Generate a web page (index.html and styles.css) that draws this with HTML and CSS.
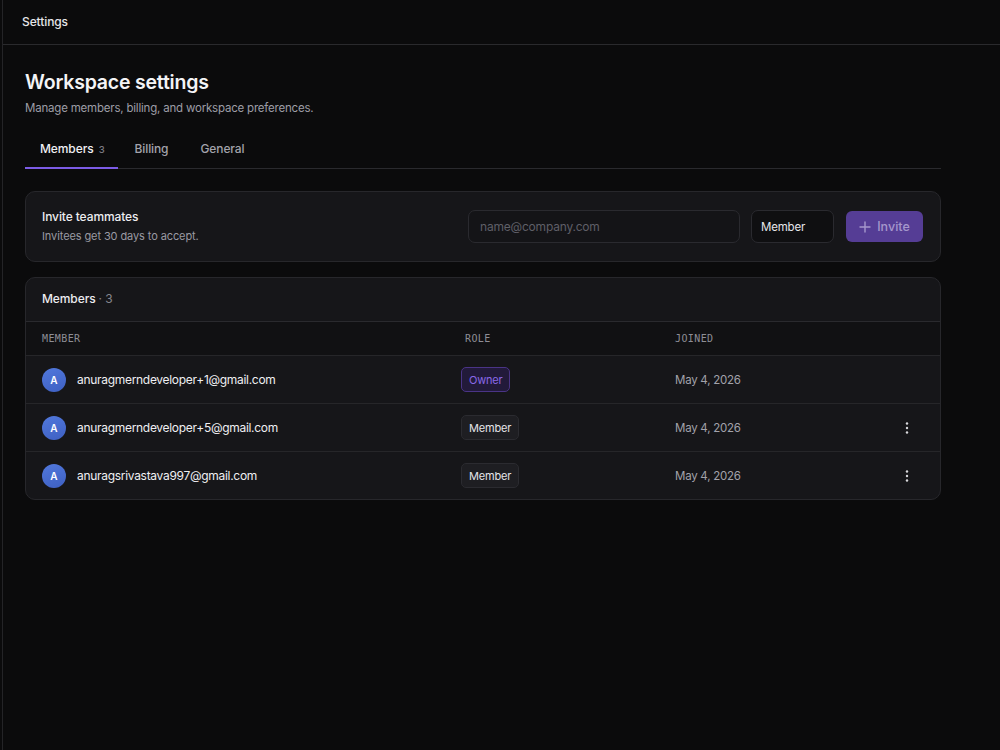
FILE: index.html
```html
<!DOCTYPE html>
<html lang="en">
<head>
<meta charset="utf-8">
<title>Settings</title>
<link rel="stylesheet" href="styles.css">
</head>
<body>
<div class="app">
  <header class="topbar">Settings</header>
  <main class="main">
    <h1 class="title">Workspace settings</h1>
    <p class="subtitle">Manage members, billing, and workspace preferences.</p>
    <nav class="tabs">
      <div class="tab active">Members <span class="tab-count">3</span></div>
      <div class="tab">Billing</div>
      <div class="tab">General</div>
    </nav>

    <section class="card invite">
      <div class="invite-text">
        <div class="invite-title">Invite teammates</div>
        <div class="invite-sub">Invitees get 30 days to accept.</div>
      </div>
      <div class="invite-form">
        <div class="input">name@company.com</div>
        <div class="select">Member</div>
        <button class="btn-invite">
          <svg class="plus" width="12" height="12" viewBox="0 0 12 12"><path d="M6 1v10M1 6h10" stroke="currentColor" stroke-width="1.4" stroke-linecap="round"/></svg>
          Invite
        </button>
      </div>
    </section>

    <section class="card members">
      <div class="members-head">Members <span class="muted">· 3</span></div>
      <div class="row thead">
        <div class="th">MEMBER</div>
        <div class="th th-role">ROLE</div>
        <div class="th">JOINED</div>
        <div></div>
      </div>
      <div class="row">
        <div class="cell-member"><span class="avatar">A</span><span class="email">anuragmerndeveloper+1@gmail.com</span></div>
        <div><span class="badge owner">Owner</span></div>
        <div class="date">May 4, 2026</div>
        <div></div>
      </div>
      <div class="row">
        <div class="cell-member"><span class="avatar">A</span><span class="email">anuragmerndeveloper+5@gmail.com</span></div>
        <div><span class="badge">Member</span></div>
        <div class="date">May 4, 2026</div>
        <div class="actions"><svg width="16" height="16" viewBox="0 0 16 16"><circle cx="8" cy="3.5" r="1.2" fill="#d8d8dc"/><circle cx="8" cy="8" r="1.2" fill="#d8d8dc"/><circle cx="8" cy="12.5" r="1.2" fill="#d8d8dc"/></svg></div>
      </div>
      <div class="row last">
        <div class="cell-member"><span class="avatar">A</span><span class="email">anuragsrivastava997@gmail.com</span></div>
        <div><span class="badge">Member</span></div>
        <div class="date">May 4, 2026</div>
        <div class="actions"><svg width="16" height="16" viewBox="0 0 16 16"><circle cx="8" cy="3.5" r="1.2" fill="#d8d8dc"/><circle cx="8" cy="8" r="1.2" fill="#d8d8dc"/><circle cx="8" cy="12.5" r="1.2" fill="#d8d8dc"/></svg></div>
      </div>
    </section>
  </main>
</div>
</body>
</html>
```

FILE: styles.css
```css
* { box-sizing: border-box; }
html, body {
  margin: 0;
  padding: 0;
  background: #0b0b0c;
  height: 100%;
}
body {
  font-family: Inter, "Noto Sans", sans-serif;
  color: #ececef;
  -webkit-font-smoothing: antialiased;
}
.app {
  margin-left: 2px;
  border-left: 1px solid #242427;
  min-height: 100%;
}
.topbar {
  height: 45px;
  border-bottom: 1px solid #2a2a2d;
  padding-left: 19px;
  display: flex;
  align-items: center;
  font-size: 12px;
  letter-spacing: -0.1px;
  font-weight: 500;
  color: #e6e6e9;
  padding-bottom: 2px;
}
.main {
  padding: 23px 0 0 22px;
  width: 938px;
}
.title {
  margin: 0;
  font-size: 19.5px;
  line-height: 28px;
  font-weight: 600;
  letter-spacing: -0.2px;
  color: #f4f4f6;
}
.subtitle {
  margin: 3px 0 0;
  font-size: 11.5px;
  letter-spacing: -0.2px;
  line-height: 18px;
  color: #9d9da6;
}
.tabs {
  margin-top: 14px;
  display: flex;
  border-bottom: 1px solid #2a2a2e;
}
.tab {
  height: 38px;
  padding: 9px 15px 9px;
  font-size: 12px;
  letter-spacing: -0.1px;
  line-height: 18px;
  color: #a3a3ab;
  font-weight: 500;
  margin-right: 2px;
  border-bottom: 2px solid transparent;
  margin-bottom: -1px;
}
.tab.active {
  color: #f0f0f3;
  border-bottom-color: #7c5ce6;
  padding-right: 13px;
}
.tab-count {
  font-size: 9.5px;
  line-height: 1;
  color: #7a7a82;
  margin-left: 2px;
}
.card {
  background: #161619;
  border: 1px solid #27272b;
  border-radius: 10px;
}
.invite {
  margin-top: 22px;
  height: 71px;
  display: flex;
  align-items: center;
  justify-content: space-between;
  padding: 0 17px 0 16px;
}
.invite-title {
  font-size: 12px;
  letter-spacing: -0.1px;
  line-height: 18px;
  font-weight: 500;
  color: #ededf0;
  margin-top: -2px;
}
.invite-sub {
  margin-top: 2px;
  font-size: 11px;
  letter-spacing: -0.1px;
  line-height: 16px;
  color: #9a9aa3;
}
.invite-form {
  display: flex;
  align-items: center;
}
.input {
  width: 272px;
  height: 33px;
  border: 1px solid #2a2a2f;
  border-radius: 7px;
  background: #141417;
  display: flex;
  align-items: center;
  padding-left: 11px;
  font-size: 12px;
  letter-spacing: -0.2px;
  color: #5f5f67;
}
.select {
  margin-left: 11px;
  width: 83px;
  height: 33px;
  border: 1px solid #2a2a2f;
  border-radius: 7px;
  background: #0f0f11;
  display: flex;
  align-items: center;
  padding-left: 9px;
  font-size: 11.5px;
  letter-spacing: -0.2px;
  color: #e6e6ea;
}
.btn-invite {
  margin-left: 12px;
  width: 77px;
  height: 31px;
  border: none;
  border-radius: 6px;
  background: #553d95;
  color: #a597cc;
  font-family: inherit;
  font-size: 12.5px;
  font-weight: 500;
  display: flex;
  align-items: center;
  justify-content: center;
  gap: 6px;
  padding: 0;
}
.plus { display: block; }
.members {
  margin-top: 15px;
  overflow: hidden;
}
.members-head {
  height: 44px;
  border-bottom: 1px solid #2a2a2e;
  display: flex;
  align-items: center;
  padding-left: 16px;
  font-size: 12px;
  letter-spacing: -0.1px;
  font-weight: 500;
  color: #ececef;
  padding-bottom: 2px;
}
.muted { color: #85858d; font-weight: 400; margin-left: 3px; }
.row {
  display: grid;
  grid-template-columns: 419px 214px 1fr 41px;
  align-items: center;
  height: 48px;
  padding-left: 16px;
  border-bottom: 1px solid #262629;
}
.row.last { border-bottom: none; height: 47px; }
.thead {
  height: 34px;
  background: #111113;
}
.th {
  font-family: "DejaVu Sans Mono", "Liberation Mono", monospace;
  font-size: 10px;
  letter-spacing: 0.4px;
  color: #8e8e96;
}
.th-role { padding-left: 4px; }
.cell-member {
  display: flex;
  align-items: center;
}
.avatar {
  width: 24px;
  height: 24px;
  border-radius: 50%;
  background: linear-gradient(160deg, #5178dc, #3e60c2);
  color: #fff;
  font-size: 10px;
  font-weight: 600;
  display: flex;
  align-items: center;
  justify-content: center;
}
.email {
  margin-left: 11px;
  font-size: 12px;
  letter-spacing: -0.3px;
  color: #efeff2;
}
.badge {
  display: inline-flex;
  align-items: center;
  height: 25px;
  padding: 0 7px;
  border-radius: 5px;
  font-size: 11px;
  letter-spacing: -0.2px;
  background: #1e1e22;
  border: 1px solid #2b2b30;
  color: #e4e4e8;
}
.badge.owner {
  background: #221a3a;
  border-color: #4a3486;
  color: #8a68e6;
}
.date {
  font-size: 11.5px;
  letter-spacing: -0.25px;
  color: #a2a2aa;
}
.actions {
  display: flex;
  align-items: center;
}
.actions svg { display: block; }
```
